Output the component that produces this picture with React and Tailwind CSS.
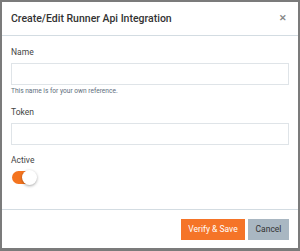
import React, { useState } from 'react'

export default function App() {
  const [active, setActive] = useState(true)

  return (
    <div className="w-[300px] h-[251px] bg-[#7b7b7b] pt-[2px] pl-[2px] pr-[2px] pb-[3px] overflow-hidden" style={{ fontFamily: 'Roboto, sans-serif' }}>
      <div className="h-full bg-white flex flex-col">
        <div className="h-[34px] shrink-0 flex items-center justify-between pl-[9px] pr-[11px] border-b border-[#d3dce2]">
          <span className="text-[10.5px] font-medium text-[#333]">Create/Edit Runner Api Integration</span>
          <span className="text-[9px] font-bold text-[#888] leading-none">✕</span>
        </div>

        <div className="flex-1 px-[9px] pt-[10px]">
          <label className="block text-[8.5px] text-[#444] leading-[12px]">Name</label>
          <input className="mt-[5px] block w-[278px] h-[22px] border border-[#dfe4e8] outline-none" />
          <p className="mt-[1px] text-[6.6px] text-[#5d6d7b] leading-[10px]">This name is for your own reference.</p>

          <label className="mt-[10px] block text-[8.5px] text-[#444] leading-[12px]">Token</label>
          <input className="mt-[5px] block w-[278px] h-[22px] border border-[#dfe4e8] outline-none" />

          <label className="mt-[9px] block text-[8.5px] text-[#444] leading-[12px]">Active</label>
          <button
            onClick={() => setActive(!active)}
            className={`mt-[5px] ml-[1px] relative block w-[23px] h-[13px] rounded-full ${active ? 'bg-[#f4741f]' : 'bg-[#ccc]'}`}
          >
            <span className={`absolute top-[-1px] w-[15px] h-[15px] rounded-full bg-white shadow-[0_1px_3px_rgba(0,0,0,0.35)] ${active ? 'left-[10px]' : 'left-[-2px]'}`} />
          </button>
        </div>

        <div className="h-[39px] shrink-0 border-t border-[#d3dce2] flex items-start justify-end gap-[3px] pr-[9px] pt-[9px]">
          <button className="w-[64px] h-[21px] bg-[#f57428] text-white text-[8.5px]">Verify &amp; Save</button>
          <button className="w-[41px] h-[21px] bg-[#a9b7c2] text-[#333] text-[8.5px]">Cancel</button>
        </div>
      </div>
    </div>
  )
}
